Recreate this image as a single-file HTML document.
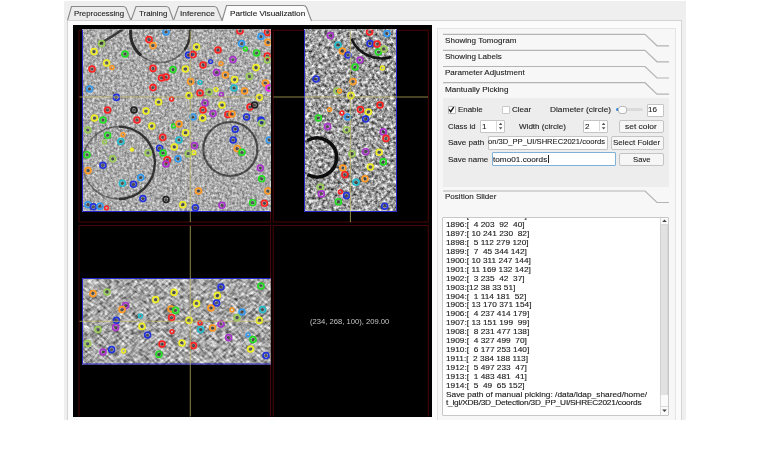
<!DOCTYPE html>
<html><head><meta charset="utf-8">
<style>
html,body{margin:0;padding:0;background:#fff;}
body{width:780px;height:470px;overflow:hidden;position:relative;font-family:"Liberation Sans",sans-serif;font-size:8.3px;color:#222;}
.a{position:absolute;}
.t{position:absolute;white-space:pre;line-height:1;-webkit-text-stroke:0.1px #222;}
#win{left:64px;top:1px;width:622px;height:419px;background:#efefef;}
#frame{left:67px;top:19.5px;width:613px;height:402px;background:#fbfbfb;border:1px solid #d4d4d4;}
#viewer{left:73px;top:25px;width:359.4px;height:391.5px;background:#000;overflow:hidden;}
#grp{left:437px;top:28px;width:237px;height:400px;background:#f7f7f7;border:1px solid #e4e4e4;}
.box{position:absolute;background:#fff;border:1px solid #c4c4c4;border-radius:1px;}
.btn{position:absolute;background:#f6f6f6;border:1px solid #c4c4c4;border-radius:2px;text-align:center;}
</style></head><body>
<div class="a" style="left:0;top:0;width:780px;height:420px;overflow:hidden;filter:blur(0.3px);">
<div class="a" id="win"></div>
<svg class="a" style="left:0;top:0" width="780" height="470">
  <!-- tabs -->
  <path d="M67.5 20.5 L71.5 6.5 L123 6.5 Q125 6.5 126 8 L131 20.5" fill="#ececec" stroke="#8a8a8a" stroke-width="1.1"/>
  <path d="M131 20.5 L136 6.5 L166 6.5 Q168 6.5 169 8 L173.5 20.5" fill="#ececec" stroke="#8a8a8a" stroke-width="1.1"/>
  <path d="M173.5 20.5 L178.5 6.5 L214 6.5 Q216 6.5 217 8 L222 20.5" fill="#ececec" stroke="#8a8a8a" stroke-width="1.1"/>
</svg>
<div class="a" id="frame"></div>
<svg class="a" style="left:0;top:0" width="780" height="470">
  <path d="M222 21 L226.5 5.5 L303 5.5 Q305.5 5.5 306.5 7.5 L311.5 21" fill="#fbfbfb" stroke="#8a8a8a" stroke-width="1.1"/>
</svg>
<div class="t" style="left:74.01px;top:10.01px;font-size:7.2px;transform-origin:0 0;transform:scaleX(1.090);">Preprocessing</div>
<div class="t" style="left:139.00px;top:10.01px;font-size:7.2px;transform-origin:0 0;transform:scaleX(1.104);">Training</div>
<div class="t" style="left:179.96px;top:10.18px;font-size:7.2px;transform-origin:0 0;transform:scaleX(1.162);">Inference</div>
<div class="t" style="left:229.60px;top:9.56px;font-size:7.2px;transform-origin:0 0;transform:scaleX(1.136);">Particle Visualization</div>

<div class="a" id="viewer"></div>
<!--IMGS-->
<svg class="a" style="left:0;top:0" width="780" height="470">
<clipPath id="cV"><rect x="73" y="25.3" width="359.5" height="391.2"/></clipPath>
<defs>
<filter id="nTL" x="0" y="0" width="100%" height="100%" filterUnits="objectBoundingBox" color-interpolation-filters="sRGB">
  <feTurbulence type="fractalNoise" baseFrequency="0.4" numOctaves="3" seed="3"/>
  <feGaussianBlur stdDeviation="0.6"/>
  <feColorMatrix type="matrix" values="0.72 0 0 0 0.31  0.72 0 0 0 0.31  0.72 0 0 0 0.31  0 0 0 0 1"/>
</filter>
<filter id="nTR" x="0" y="0" width="100%" height="100%" filterUnits="objectBoundingBox" color-interpolation-filters="sRGB">
  <feTurbulence type="fractalNoise" baseFrequency="0.32" numOctaves="3" seed="7"/>
  <feGaussianBlur stdDeviation="0.5"/>
  <feColorMatrix type="matrix" values="1.3 0 0 0 -0.03  1.3 0 0 0 -0.03  1.3 0 0 0 -0.03  0 0 0 0 1"/>
</filter>
<filter id="nBL" x="0" y="0" width="100%" height="100%" filterUnits="objectBoundingBox" color-interpolation-filters="sRGB">
  <feTurbulence type="fractalNoise" baseFrequency="0.15 0.5" numOctaves="3" seed="11"/>
  <feGaussianBlur stdDeviation="0.4"/>
  <feColorMatrix type="matrix" values="1.7 0 0 0 -0.2  1.7 0 0 0 -0.2  1.7 0 0 0 -0.2  0 0 0 0 1"/>
</filter>
<filter id="nBL2" x="0" y="0" width="100%" height="100%" filterUnits="objectBoundingBox" color-interpolation-filters="sRGB">
  <feTurbulence type="fractalNoise" baseFrequency="0.15 0.5" numOctaves="3" seed="23"/>
  <feGaussianBlur stdDeviation="0.4"/>
  <feColorMatrix type="matrix" values="1.7 0 0 0 -0.2  1.7 0 0 0 -0.2  1.7 0 0 0 -0.2  0 0 0 0 1"/>
</filter>
<filter id="soft" x="-10%" y="-10%" width="120%" height="120%"><feGaussianBlur stdDeviation="0.55"/></filter>
<clipPath id="cTL"><rect x="82" y="29.7" width="188.6" height="182.3"/></clipPath>
<clipPath id="cTR"><rect x="304" y="29.7" width="93" height="182.3"/></clipPath>
<clipPath id="cBL"><rect x="82" y="278" width="188.6" height="86.5"/></clipPath>
</defs>
<g clip-path="url(#cV)">
<g fill="none" stroke="#4a0606" stroke-width="1">
<rect x="79" y="30.3" width="191.5" height="191.7"/>
<rect x="273.2" y="30.3" width="155" height="191.7"/>
<rect x="79" y="225.5" width="191.5" height="200"/>
<rect x="273.2" y="225.5" width="155" height="200"/>
</g>
<rect x="82" y="29.7" width="188.6" height="182.3" fill="#aaa" filter="url(#nTL)"/>
<rect x="304" y="29.7" width="93" height="182.3" fill="#aaa" filter="url(#nTR)"/>
<g clip-path="url(#cBL)"><g transform="rotate(40 176 321)"><rect x="46" y="191" width="260" height="260" filter="url(#nBL)"/></g><g transform="rotate(-40 176 321)" opacity="0.5"><rect x="46" y="191" width="260" height="260" filter="url(#nBL2)"/></g></g>
<g clip-path="url(#cTL)"><g fill="none" stroke="#262626" filter="url(#soft)">
<circle cx="160.25" cy="33" r="29.6" stroke-width="1.8" stroke-opacity="0.55"/>
<path d="M132.4 22.9 A29.6 29.6 0 0 0 141 55.5" stroke-width="3" stroke-opacity="0.95"/>
<path d="M188.05 22.9 A29.6 29.6 0 0 1 184.5 50" stroke-width="2.4" stroke-opacity="0.9"/>
<path d="M118.7 126.6 A36.2 36.2 0 0 1 118.7 199" stroke-width="2.4" stroke-opacity="0.9"/>
<path d="M118.7 199 A36.2 36.2 0 0 1 118.7 126.6" stroke-width="1.6" stroke-opacity="0.5"/>
<circle cx="230.3" cy="149" r="27" stroke-width="2.2" stroke-opacity="0.72"/>
<path d="M124 28.5 Q112 37 99 44" stroke-width="2.4" stroke-opacity="0.85"/>
</g></g>
<g clip-path="url(#cTR)"><g fill="none" stroke="#111" filter="url(#soft)">
<path d="M307.5 140.5 A19.5 19.5 0 1 1 307.5 174.5" stroke-width="3.6"/>
<path d="M351.5 39 A33.2 33.2 0 0 0 391.5 57" stroke-width="2.6" stroke-opacity="0.95"/>
</g></g>
<g clip-path="url(#cTL)" fill="none" stroke-width="1.7">
<circle cx="166" cy="32" r="1.6" fill="#282828" fill-opacity="0.7" stroke="none"/><circle cx="166" cy="32" r="2.95" stroke="#39e"/>
<circle cx="149" cy="39.6" r="1.6" fill="#282828" fill-opacity="0.7" stroke="none"/><circle cx="149" cy="39.6" r="2.95" stroke="#f22"/>
<circle cx="153" cy="45.6" r="1.6" fill="#282828" fill-opacity="0.7" stroke="none"/><circle cx="153" cy="45.6" r="2.95" stroke="#f92"/>
<circle cx="101.6" cy="43.6" r="1.6" fill="#282828" fill-opacity="0.7" stroke="none"/><circle cx="101.6" cy="43.6" r="2.95" stroke="#9c5"/>
<circle cx="94" cy="51.6" r="1.6" fill="#282828" fill-opacity="0.7" stroke="none"/><circle cx="94" cy="51.6" r="2.95" stroke="#ee2"/>
<circle cx="125" cy="54" r="1.6" fill="#282828" fill-opacity="0.7" stroke="none"/><circle cx="125" cy="54" r="2.95" stroke="#2d2"/>
<circle cx="106.6" cy="63" r="1.6" fill="#282828" fill-opacity="0.7" stroke="none"/><circle cx="106.6" cy="63" r="2.95" stroke="#ee2"/>
<circle cx="112" cy="67.6" r="1.9" stroke="#f92" stroke-width="1.5"/>
<circle cx="92" cy="69" r="1.6" fill="#282828" fill-opacity="0.7" stroke="none"/><circle cx="92" cy="69" r="2.95" stroke="#f22"/>
<circle cx="153" cy="68.4" r="1.6" fill="#282828" fill-opacity="0.7" stroke="none"/><circle cx="153" cy="68.4" r="2.95" stroke="#f22"/>
<circle cx="173" cy="69.6" r="1.6" fill="#282828" fill-opacity="0.7" stroke="none"/><circle cx="173" cy="69.6" r="2.95" stroke="#2d2"/>
<circle cx="166" cy="77" r="1.6" fill="#282828" fill-opacity="0.7" stroke="none"/><circle cx="166" cy="77" r="2.95" stroke="#f22"/>
<circle cx="161.6" cy="78" r="1.6" fill="#282828" fill-opacity="0.7" stroke="none"/><circle cx="161.6" cy="78" r="2.95" stroke="#f22"/>
<circle cx="89.6" cy="89" r="1.6" fill="#282828" fill-opacity="0.7" stroke="none"/><circle cx="89.6" cy="89" r="2.95" stroke="#39e"/>
<circle cx="153" cy="87.6" r="1.6" fill="#282828" fill-opacity="0.7" stroke="none"/><circle cx="153" cy="87.6" r="2.95" stroke="#f22"/>
<circle cx="116.4" cy="97.4" r="1.6" fill="#282828" fill-opacity="0.7" stroke="none"/><circle cx="116.4" cy="97.4" r="2.95" stroke="#23d"/>
<circle cx="158.6" cy="102" r="1.6" fill="#282828" fill-opacity="0.7" stroke="none"/><circle cx="158.6" cy="102" r="2.95" stroke="#ee2"/>
<circle cx="171.6" cy="99" r="1.9" stroke="#f22" stroke-width="1.5"/>
<circle cx="107.6" cy="110" r="1.6" fill="#282828" fill-opacity="0.7" stroke="none"/><circle cx="107.6" cy="110" r="2.95" stroke="#f22"/>
<circle cx="146" cy="111" r="1.6" fill="#282828" fill-opacity="0.7" stroke="none"/><circle cx="146" cy="111" r="2.95" stroke="#ee2"/>
<circle cx="134" cy="110" r="1.6" fill="#282828" fill-opacity="0.7" stroke="none"/><circle cx="134" cy="110" r="2.95" stroke="#222"/>
<circle cx="94.4" cy="118" r="1.6" fill="#282828" fill-opacity="0.7" stroke="none"/><circle cx="94.4" cy="118" r="2.95" stroke="#ee2"/>
<circle cx="103" cy="120" r="1.6" fill="#282828" fill-opacity="0.7" stroke="none"/><circle cx="103" cy="120" r="2.95" stroke="#2d2"/>
<circle cx="137" cy="120" r="1.6" fill="#282828" fill-opacity="0.7" stroke="none"/><circle cx="137" cy="120" r="2.95" stroke="#f22"/>
<circle cx="240" cy="31" r="1.6" fill="#282828" fill-opacity="0.7" stroke="none"/><circle cx="240" cy="31" r="2.95" stroke="#f22"/>
<circle cx="267.4" cy="32.4" r="1.6" fill="#282828" fill-opacity="0.7" stroke="none"/><circle cx="267.4" cy="32.4" r="2.95" stroke="#f22"/>
<circle cx="261" cy="36.4" r="1.6" fill="#282828" fill-opacity="0.7" stroke="none"/><circle cx="261" cy="36.4" r="2.95" stroke="#39e"/>
<circle cx="268" cy="42.4" r="1.6" fill="#282828" fill-opacity="0.7" stroke="none"/><circle cx="268" cy="42.4" r="2.95" stroke="#f92"/>
<circle cx="241.6" cy="43.6" r="1.6" fill="#282828" fill-opacity="0.7" stroke="none"/><circle cx="241.6" cy="43.6" r="2.95" stroke="#39e"/>
<circle cx="245.4" cy="49" r="1.9" stroke="#2d2" stroke-width="1.5"/>
<circle cx="196.6" cy="47" r="1.6" fill="#282828" fill-opacity="0.7" stroke="none"/><circle cx="196.6" cy="47" r="2.95" stroke="#ee2"/>
<circle cx="218" cy="50" r="1.6" fill="#282828" fill-opacity="0.7" stroke="none"/><circle cx="218" cy="50" r="2.95" stroke="#f22"/>
<circle cx="256.6" cy="53" r="1.6" fill="#282828" fill-opacity="0.7" stroke="none"/><circle cx="256.6" cy="53" r="2.95" stroke="#2d2"/>
<circle cx="188.6" cy="55" r="1.6" fill="#282828" fill-opacity="0.7" stroke="none"/><circle cx="188.6" cy="55" r="2.95" stroke="#23d"/>
<circle cx="193" cy="54.6" r="1.6" fill="#282828" fill-opacity="0.7" stroke="none"/><circle cx="193" cy="54.6" r="2.95" stroke="#f22"/>
<circle cx="267.4" cy="56" r="1.6" fill="#282828" fill-opacity="0.7" stroke="none"/><circle cx="267.4" cy="56" r="2.95" stroke="#f22"/>
<circle cx="210.6" cy="61.6" r="1.9" stroke="#23d" stroke-width="1.5"/>
<circle cx="233" cy="59.6" r="1.6" fill="#282828" fill-opacity="0.7" stroke="none"/><circle cx="233" cy="59.6" r="2.95" stroke="#a3c"/>
<circle cx="267.4" cy="60" r="1.6" fill="#282828" fill-opacity="0.7" stroke="none"/><circle cx="267.4" cy="60" r="2.95" stroke="#9c5"/>
<circle cx="203" cy="65" r="1.6" fill="#282828" fill-opacity="0.7" stroke="none"/><circle cx="203" cy="65" r="2.95" stroke="#f22"/>
<circle cx="221" cy="63.6" r="1.9" stroke="#f92" stroke-width="1.5"/>
<circle cx="185.4" cy="69" r="1.6" fill="#282828" fill-opacity="0.7" stroke="none"/><circle cx="185.4" cy="69" r="2.95" stroke="#ee2"/>
<circle cx="256" cy="67.6" r="1.6" fill="#282828" fill-opacity="0.7" stroke="none"/><circle cx="256" cy="67.6" r="2.95" stroke="#ee2"/>
<circle cx="216.6" cy="72.4" r="1.6" fill="#282828" fill-opacity="0.7" stroke="none"/><circle cx="216.6" cy="72.4" r="2.95" stroke="#a3c"/>
<circle cx="225.4" cy="75" r="1.6" fill="#282828" fill-opacity="0.7" stroke="none"/><circle cx="225.4" cy="75" r="2.95" stroke="#f92"/>
<circle cx="249.4" cy="76.4" r="1.6" fill="#282828" fill-opacity="0.7" stroke="none"/><circle cx="249.4" cy="76.4" r="2.95" stroke="#9c5"/>
<circle cx="234.6" cy="79.6" r="1.6" fill="#282828" fill-opacity="0.7" stroke="none"/><circle cx="234.6" cy="79.6" r="2.95" stroke="#ee2"/>
<circle cx="190.6" cy="81.6" r="1.6" fill="#282828" fill-opacity="0.7" stroke="none"/><circle cx="190.6" cy="81.6" r="2.95" stroke="#f92"/>
<circle cx="200" cy="82.4" r="1.9" stroke="#2bc" stroke-width="1.5"/>
<circle cx="265.4" cy="83" r="1.6" fill="#282828" fill-opacity="0.7" stroke="none"/><circle cx="265.4" cy="83" r="2.95" stroke="#f92"/>
<circle cx="234" cy="88" r="1.6" fill="#282828" fill-opacity="0.7" stroke="none"/><circle cx="234" cy="88" r="2.95" stroke="#2bc"/>
<circle cx="269" cy="88" r="1.6" fill="#282828" fill-opacity="0.7" stroke="none"/><circle cx="269" cy="88" r="2.95" stroke="#e2e"/>
<circle cx="244.6" cy="91" r="1.6" fill="#282828" fill-opacity="0.7" stroke="none"/><circle cx="244.6" cy="91" r="2.95" stroke="#f92"/>
<circle cx="216" cy="89.6" r="1.9" stroke="#ee2" stroke-width="1.5"/>
<circle cx="209" cy="92" r="1.6" fill="#282828" fill-opacity="0.7" stroke="none"/><circle cx="209" cy="92" r="2.95" stroke="#9c5"/>
<circle cx="200" cy="93" r="1.6" fill="#282828" fill-opacity="0.7" stroke="none"/><circle cx="200" cy="93" r="2.95" stroke="#f22"/>
<circle cx="189" cy="95.6" r="1.6" fill="#282828" fill-opacity="0.7" stroke="none"/><circle cx="189" cy="95.6" r="2.95" stroke="#ee2"/>
<circle cx="221.4" cy="94.4" r="1.9" stroke="#a3c" stroke-width="1.5"/>
<circle cx="259.4" cy="97.6" r="1.6" fill="#282828" fill-opacity="0.7" stroke="none"/><circle cx="259.4" cy="97.6" r="2.95" stroke="#ee2"/>
<circle cx="205" cy="103" r="1.6" fill="#282828" fill-opacity="0.7" stroke="none"/><circle cx="205" cy="103" r="2.95" stroke="#a3c"/>
<circle cx="222" cy="105" r="1.6" fill="#282828" fill-opacity="0.7" stroke="none"/><circle cx="222" cy="105" r="2.95" stroke="#ee2"/>
<circle cx="250" cy="107" r="1.6" fill="#282828" fill-opacity="0.7" stroke="none"/><circle cx="250" cy="107" r="2.95" stroke="#f22"/>
<circle cx="254.6" cy="105" r="1.6" fill="#282828" fill-opacity="0.7" stroke="none"/><circle cx="254.6" cy="105" r="2.95" stroke="#222"/>
<circle cx="203" cy="110" r="1.6" fill="#282828" fill-opacity="0.7" stroke="none"/><circle cx="203" cy="110" r="2.95" stroke="#f22"/>
<circle cx="213" cy="113.6" r="1.6" fill="#282828" fill-opacity="0.7" stroke="none"/><circle cx="213" cy="113.6" r="2.95" stroke="#a3c"/>
<circle cx="228" cy="114.4" r="1.6" fill="#282828" fill-opacity="0.7" stroke="none"/><circle cx="228" cy="114.4" r="2.95" stroke="#f22"/>
<circle cx="232" cy="114" r="1.6" fill="#282828" fill-opacity="0.7" stroke="none"/><circle cx="232" cy="114" r="2.95" stroke="#f92"/>
<circle cx="246.6" cy="117" r="1.6" fill="#282828" fill-opacity="0.7" stroke="none"/><circle cx="246.6" cy="117" r="2.95" stroke="#23d"/>
<circle cx="193" cy="117" r="1.6" fill="#282828" fill-opacity="0.7" stroke="none"/><circle cx="193" cy="117" r="2.95" stroke="#39e"/>
<circle cx="202.6" cy="118" r="1.6" fill="#282828" fill-opacity="0.7" stroke="none"/><circle cx="202.6" cy="118" r="2.95" stroke="#ee2"/>
<circle cx="261" cy="120" r="1.6" fill="#282828" fill-opacity="0.7" stroke="none"/><circle cx="261" cy="120" r="2.95" stroke="#23d"/>
<circle cx="151.8" cy="126" r="1.6" fill="#282828" fill-opacity="0.7" stroke="none"/><circle cx="151.8" cy="126" r="2.95" stroke="#ee2"/>
<circle cx="173.5" cy="126" r="1.9" stroke="#2d2" stroke-width="1.5"/>
<circle cx="179" cy="124" r="1.6" fill="#282828" fill-opacity="0.7" stroke="none"/><circle cx="179" cy="124" r="2.95" stroke="#f92"/>
<circle cx="87.8" cy="130" r="1.6" fill="#282828" fill-opacity="0.7" stroke="none"/><circle cx="87.8" cy="130" r="2.95" stroke="#9c5"/>
<circle cx="107.6" cy="135.3" r="1.6" fill="#282828" fill-opacity="0.7" stroke="none"/><circle cx="107.6" cy="135.3" r="2.95" stroke="#2d2"/>
<circle cx="122.9" cy="134.7" r="1.9" stroke="#f92" stroke-width="1.5"/>
<circle cx="104.5" cy="142" r="1.9" stroke="#9c5" stroke-width="1.5"/>
<circle cx="120.8" cy="141.5" r="1.6" fill="#282828" fill-opacity="0.7" stroke="none"/><circle cx="120.8" cy="141.5" r="2.95" stroke="#2bc"/>
<circle cx="162.7" cy="137.4" r="1.6" fill="#282828" fill-opacity="0.7" stroke="none"/><circle cx="162.7" cy="137.4" r="2.95" stroke="#f22"/>
<circle cx="179" cy="140" r="1.6" fill="#282828" fill-opacity="0.7" stroke="none"/><circle cx="179" cy="140" r="2.95" stroke="#2bc"/>
<circle cx="159.6" cy="148.2" r="1.6" fill="#282828" fill-opacity="0.7" stroke="none"/><circle cx="159.6" cy="148.2" r="2.95" stroke="#23d"/>
<circle cx="174.3" cy="147" r="1.6" fill="#282828" fill-opacity="0.7" stroke="none"/><circle cx="174.3" cy="147" r="2.95" stroke="#ee2"/>
<circle cx="148" cy="153" r="1.6" fill="#282828" fill-opacity="0.7" stroke="none"/><circle cx="148" cy="153" r="2.95" stroke="#9c5"/>
<circle cx="163" cy="153" r="1.6" fill="#282828" fill-opacity="0.7" stroke="none"/><circle cx="163" cy="153" r="2.95" stroke="#2d2"/>
<circle cx="87" cy="154.7" r="1.6" fill="#282828" fill-opacity="0.7" stroke="none"/><circle cx="87" cy="154.7" r="2.95" stroke="#2d2"/>
<circle cx="112.7" cy="158.8" r="1.6" fill="#282828" fill-opacity="0.7" stroke="none"/><circle cx="112.7" cy="158.8" r="2.95" stroke="#9c5"/>
<circle cx="167.3" cy="159.8" r="1.6" fill="#282828" fill-opacity="0.7" stroke="none"/><circle cx="167.3" cy="159.8" r="2.95" stroke="#f22"/>
<circle cx="178" cy="158.8" r="1.6" fill="#282828" fill-opacity="0.7" stroke="none"/><circle cx="178" cy="158.8" r="2.95" stroke="#39e"/>
<circle cx="102.9" cy="165.3" r="1.6" fill="#282828" fill-opacity="0.7" stroke="none"/><circle cx="102.9" cy="165.3" r="2.95" stroke="#23d"/>
<circle cx="166" cy="164" r="1.6" fill="#282828" fill-opacity="0.7" stroke="none"/><circle cx="166" cy="164" r="2.95" stroke="#a3c"/>
<circle cx="88" cy="170.6" r="1.6" fill="#282828" fill-opacity="0.7" stroke="none"/><circle cx="88" cy="170.6" r="2.95" stroke="#f92"/>
<circle cx="140.8" cy="177.6" r="1.6" fill="#282828" fill-opacity="0.7" stroke="none"/><circle cx="140.8" cy="177.6" r="2.95" stroke="#39e"/>
<circle cx="122.4" cy="183.3" r="1.6" fill="#282828" fill-opacity="0.7" stroke="none"/><circle cx="122.4" cy="183.3" r="2.95" stroke="#2bc"/>
<circle cx="133.5" cy="184.3" r="1.6" fill="#282828" fill-opacity="0.7" stroke="none"/><circle cx="133.5" cy="184.3" r="2.95" stroke="#23d"/>
<circle cx="142.9" cy="198.6" r="1.6" fill="#282828" fill-opacity="0.7" stroke="none"/><circle cx="142.9" cy="198.6" r="2.95" stroke="#23d"/>
<circle cx="166" cy="199.6" r="1.6" fill="#282828" fill-opacity="0.7" stroke="none"/><circle cx="166" cy="199.6" r="2.95" stroke="#222"/>
<circle cx="88" cy="204.7" r="1.6" fill="#282828" fill-opacity="0.7" stroke="none"/><circle cx="88" cy="204.7" r="2.95" stroke="#39e"/>
<circle cx="106.5" cy="207.8" r="1.9" stroke="#f22" stroke-width="1.5"/>
<circle cx="261.7" cy="120" r="1.9" stroke="#23d" stroke-width="1.5"/>
<circle cx="93.3" cy="206.8" r="1.6" fill="#282828" fill-opacity="0.7" stroke="none"/><circle cx="93.3" cy="206.8" r="2.95" stroke="#23d"/>
<circle cx="100" cy="206.2" r="1.6" fill="#282828" fill-opacity="0.7" stroke="none"/><circle cx="100" cy="206.2" r="2.95" stroke="#39e"/>
<circle cx="185.6" cy="132.7" r="1.6" fill="#282828" fill-opacity="0.7" stroke="none"/><circle cx="185.6" cy="132.7" r="2.95" stroke="#ee2"/>
<circle cx="194.4" cy="145.6" r="1.6" fill="#282828" fill-opacity="0.7" stroke="none"/><circle cx="194.4" cy="145.6" r="2.95" stroke="#a3c"/>
<circle cx="193.8" cy="152.7" r="1.9" stroke="#ee2" stroke-width="1.5"/>
<circle cx="188.3" cy="153.7" r="1.6" fill="#282828" fill-opacity="0.7" stroke="none"/><circle cx="188.3" cy="153.7" r="2.95" stroke="#9c5"/>
<circle cx="261.7" cy="123" r="1.6" fill="#282828" fill-opacity="0.7" stroke="none"/><circle cx="261.7" cy="123" r="2.95" stroke="#9c5"/>
<circle cx="235.2" cy="129.2" r="1.6" fill="#282828" fill-opacity="0.7" stroke="none"/><circle cx="235.2" cy="129.2" r="2.95" stroke="#23d"/>
<circle cx="233.2" cy="140" r="1.6" fill="#282828" fill-opacity="0.7" stroke="none"/><circle cx="233.2" cy="140" r="2.95" stroke="#23d"/>
<circle cx="237.2" cy="148.6" r="1.6" fill="#282828" fill-opacity="0.7" stroke="none"/><circle cx="237.2" cy="148.6" r="2.95" stroke="#f92"/>
<circle cx="242" cy="152.3" r="1.6" fill="#282828" fill-opacity="0.7" stroke="none"/><circle cx="242" cy="152.3" r="2.95" stroke="#2d2"/>
<circle cx="269.3" cy="140" r="1.6" fill="#282828" fill-opacity="0.7" stroke="none"/><circle cx="269.3" cy="140" r="2.95" stroke="#39e"/>
<circle cx="260.3" cy="168" r="1.6" fill="#282828" fill-opacity="0.7" stroke="none"/><circle cx="260.3" cy="168" r="2.95" stroke="#a3c"/>
<circle cx="261.7" cy="178.8" r="1.6" fill="#282828" fill-opacity="0.7" stroke="none"/><circle cx="261.7" cy="178.8" r="2.95" stroke="#2d2"/>
<circle cx="198.5" cy="191" r="1.6" fill="#282828" fill-opacity="0.7" stroke="none"/><circle cx="198.5" cy="191" r="2.95" stroke="#f92"/>
<circle cx="267.9" cy="191" r="1.6" fill="#282828" fill-opacity="0.7" stroke="none"/><circle cx="267.9" cy="191" r="2.95" stroke="#f92"/>
<circle cx="182.8" cy="204.7" r="1.6" fill="#282828" fill-opacity="0.7" stroke="none"/><circle cx="182.8" cy="204.7" r="2.95" stroke="#ee2"/>
<circle cx="195.4" cy="207.8" r="1.6" fill="#282828" fill-opacity="0.7" stroke="none"/><circle cx="195.4" cy="207.8" r="2.95" stroke="#23d"/>
<circle cx="222" cy="205.3" r="1.6" fill="#282828" fill-opacity="0.7" stroke="none"/><circle cx="222" cy="205.3" r="2.95" stroke="#a3c"/>
<circle cx="252.6" cy="202.7" r="1.6" fill="#282828" fill-opacity="0.7" stroke="none"/><circle cx="252.6" cy="202.7" r="2.95" stroke="#2d2"/>
<circle cx="264.4" cy="203.3" r="1.6" fill="#282828" fill-opacity="0.7" stroke="none"/><circle cx="264.4" cy="203.3" r="2.95" stroke="#f22"/>
</g>
<g clip-path="url(#cTR)" fill="none" stroke-width="1.7">
<circle cx="330.4" cy="35.6" r="1.6" fill="#282828" fill-opacity="0.7" stroke="none"/><circle cx="330.4" cy="35.6" r="2.95" stroke="#a3c"/>
<circle cx="369.6" cy="32" r="1.6" fill="#282828" fill-opacity="0.7" stroke="none"/><circle cx="369.6" cy="32" r="2.95" stroke="#f22"/>
<circle cx="387" cy="33.6" r="1.6" fill="#282828" fill-opacity="0.7" stroke="none"/><circle cx="387" cy="33.6" r="2.95" stroke="#39e"/>
<circle cx="338" cy="45" r="1.6" fill="#282828" fill-opacity="0.7" stroke="none"/><circle cx="338" cy="45" r="2.95" stroke="#2bc"/>
<circle cx="370" cy="43.6" r="1.6" fill="#282828" fill-opacity="0.7" stroke="none"/><circle cx="370" cy="43.6" r="2.95" stroke="#23d"/>
<circle cx="377" cy="44" r="1.6" fill="#282828" fill-opacity="0.7" stroke="none"/><circle cx="377" cy="44" r="2.95" stroke="#f22"/>
<circle cx="378.4" cy="52" r="1.6" fill="#282828" fill-opacity="0.7" stroke="none"/><circle cx="378.4" cy="52" r="2.95" stroke="#2d2"/>
<circle cx="384" cy="49" r="1.6" fill="#282828" fill-opacity="0.7" stroke="none"/><circle cx="384" cy="49" r="2.95" stroke="#9c5"/>
<circle cx="342.4" cy="51" r="1.6" fill="#282828" fill-opacity="0.7" stroke="none"/><circle cx="342.4" cy="51" r="2.95" stroke="#f92"/>
<circle cx="348" cy="55" r="1.6" fill="#282828" fill-opacity="0.7" stroke="none"/><circle cx="348" cy="55" r="2.95" stroke="#23d"/>
<circle cx="360" cy="60" r="1.6" fill="#282828" fill-opacity="0.7" stroke="none"/><circle cx="360" cy="60" r="2.95" stroke="#a3c"/>
<circle cx="355" cy="67" r="1.6" fill="#282828" fill-opacity="0.7" stroke="none"/><circle cx="355" cy="67" r="2.95" stroke="#2d2"/>
<circle cx="382.4" cy="68" r="1.9" stroke="#ee2" stroke-width="1.5"/>
<circle cx="316" cy="79" r="1.6" fill="#282828" fill-opacity="0.7" stroke="none"/><circle cx="316" cy="79" r="2.95" stroke="#23d"/>
<circle cx="353" cy="81.6" r="1.6" fill="#282828" fill-opacity="0.7" stroke="none"/><circle cx="353" cy="81.6" r="2.95" stroke="#f92"/>
<circle cx="337" cy="91" r="1.6" fill="#282828" fill-opacity="0.7" stroke="none"/><circle cx="337" cy="91" r="2.95" stroke="#9c5"/>
<circle cx="339.6" cy="91" r="1.9" stroke="#f92" stroke-width="1.5"/>
<circle cx="351" cy="95.6" r="1.6" fill="#282828" fill-opacity="0.7" stroke="none"/><circle cx="351" cy="95.6" r="2.95" stroke="#ee2"/>
<circle cx="380" cy="105" r="1.6" fill="#282828" fill-opacity="0.7" stroke="none"/><circle cx="380" cy="105" r="2.95" stroke="#f22"/>
<circle cx="329.6" cy="109.6" r="1.9" stroke="#f92" stroke-width="1.5"/>
<circle cx="360.4" cy="109.6" r="1.6" fill="#282828" fill-opacity="0.7" stroke="none"/><circle cx="360.4" cy="109.6" r="2.95" stroke="#f22"/>
<circle cx="368.4" cy="112" r="1.6" fill="#282828" fill-opacity="0.7" stroke="none"/><circle cx="368.4" cy="112" r="2.95" stroke="#ee2"/>
<circle cx="342" cy="113" r="1.9" stroke="#f22" stroke-width="1.5"/>
<circle cx="347.6" cy="117" r="1.6" fill="#282828" fill-opacity="0.7" stroke="none"/><circle cx="347.6" cy="117" r="2.95" stroke="#39e"/>
<circle cx="318.4" cy="118" r="1.6" fill="#282828" fill-opacity="0.7" stroke="none"/><circle cx="318.4" cy="118" r="2.95" stroke="#2d2"/>
<circle cx="365.6" cy="119" r="1.6" fill="#282828" fill-opacity="0.7" stroke="none"/><circle cx="365.6" cy="119" r="2.95" stroke="#23d"/>
<circle cx="327.6" cy="126.6" r="1.6" fill="#282828" fill-opacity="0.7" stroke="none"/><circle cx="327.6" cy="126.6" r="2.95" stroke="#a3c"/>
<circle cx="346.5" cy="129.8" r="1.6" fill="#282828" fill-opacity="0.7" stroke="none"/><circle cx="346.5" cy="129.8" r="2.95" stroke="#9c5"/>
<circle cx="383.3" cy="131.9" r="1.6" fill="#282828" fill-opacity="0.7" stroke="none"/><circle cx="383.3" cy="131.9" r="2.95" stroke="#a3c"/>
<circle cx="386" cy="138.4" r="1.6" fill="#282828" fill-opacity="0.7" stroke="none"/><circle cx="386" cy="138.4" r="2.95" stroke="#f22"/>
<circle cx="352" cy="153.7" r="1.6" fill="#282828" fill-opacity="0.7" stroke="none"/><circle cx="352" cy="153.7" r="2.95" stroke="#9c5"/>
<circle cx="365.7" cy="151.7" r="1.6" fill="#282828" fill-opacity="0.7" stroke="none"/><circle cx="365.7" cy="151.7" r="2.95" stroke="#a3c"/>
<circle cx="379.2" cy="152.3" r="1.6" fill="#282828" fill-opacity="0.7" stroke="none"/><circle cx="379.2" cy="152.3" r="2.95" stroke="#ee2"/>
<circle cx="383.3" cy="161.9" r="1.6" fill="#282828" fill-opacity="0.7" stroke="none"/><circle cx="383.3" cy="161.9" r="2.95" stroke="#2d2"/>
<circle cx="370.4" cy="167" r="1.6" fill="#282828" fill-opacity="0.7" stroke="none"/><circle cx="370.4" cy="167" r="2.95" stroke="#ee2"/>
<circle cx="342.9" cy="168" r="1.6" fill="#282828" fill-opacity="0.7" stroke="none"/><circle cx="342.9" cy="168" r="2.95" stroke="#f92"/>
<circle cx="344.9" cy="174.7" r="1.6" fill="#282828" fill-opacity="0.7" stroke="none"/><circle cx="344.9" cy="174.7" r="2.95" stroke="#f22"/>
<circle cx="365" cy="178.8" r="1.6" fill="#282828" fill-opacity="0.7" stroke="none"/><circle cx="365" cy="178.8" r="2.95" stroke="#f92"/>
<circle cx="356" cy="182.3" r="1.6" fill="#282828" fill-opacity="0.7" stroke="none"/><circle cx="356" cy="182.3" r="2.95" stroke="#2bc"/>
<circle cx="320.4" cy="187" r="1.6" fill="#282828" fill-opacity="0.7" stroke="none"/><circle cx="320.4" cy="187" r="2.95" stroke="#9c5"/>
<circle cx="321.4" cy="193.9" r="1.6" fill="#282828" fill-opacity="0.7" stroke="none"/><circle cx="321.4" cy="193.9" r="2.95" stroke="#a3c"/>
<circle cx="340.4" cy="191.9" r="1.9" stroke="#f22" stroke-width="1.5"/>
<circle cx="346.5" cy="195.6" r="1.6" fill="#282828" fill-opacity="0.7" stroke="none"/><circle cx="346.5" cy="195.6" r="2.95" stroke="#23d"/>
<circle cx="338.4" cy="201.7" r="1.6" fill="#282828" fill-opacity="0.7" stroke="none"/><circle cx="338.4" cy="201.7" r="2.95" stroke="#2d2"/>
<circle cx="384.7" cy="206.2" r="1.6" fill="#282828" fill-opacity="0.7" stroke="none"/><circle cx="384.7" cy="206.2" r="2.95" stroke="#23d"/>
</g>
<g clip-path="url(#cBL)" fill="none" stroke-width="1.7">
<circle cx="93" cy="293.6" r="1.6" fill="#282828" fill-opacity="0.7" stroke="none"/><circle cx="93" cy="293.6" r="2.95" stroke="#f92"/>
<circle cx="107" cy="292" r="1.6" fill="#282828" fill-opacity="0.7" stroke="none"/><circle cx="107" cy="292" r="2.95" stroke="#9c5"/>
<circle cx="174" cy="292.4" r="1.6" fill="#282828" fill-opacity="0.7" stroke="none"/><circle cx="174" cy="292.4" r="2.95" stroke="#ee2"/>
<circle cx="155.6" cy="299.6" r="1.6" fill="#282828" fill-opacity="0.7" stroke="none"/><circle cx="155.6" cy="299.6" r="2.95" stroke="#ee2"/>
<circle cx="125.6" cy="305.6" r="1.6" fill="#282828" fill-opacity="0.7" stroke="none"/><circle cx="125.6" cy="305.6" r="2.95" stroke="#a3c"/>
<circle cx="122" cy="309.6" r="1.6" fill="#282828" fill-opacity="0.7" stroke="none"/><circle cx="122" cy="309.6" r="2.95" stroke="#f92"/>
<circle cx="171" cy="309" r="1.6" fill="#282828" fill-opacity="0.7" stroke="none"/><circle cx="171" cy="309" r="2.95" stroke="#f92"/>
<circle cx="175.6" cy="310.4" r="1.6" fill="#282828" fill-opacity="0.7" stroke="none"/><circle cx="175.6" cy="310.4" r="2.95" stroke="#2d2"/>
<circle cx="140.4" cy="316" r="1.9" stroke="#2bc" stroke-width="1.5"/>
<circle cx="171.6" cy="317.6" r="1.6" fill="#282828" fill-opacity="0.7" stroke="none"/><circle cx="171.6" cy="317.6" r="2.95" stroke="#f22"/>
<circle cx="116.4" cy="320.4" r="1.6" fill="#282828" fill-opacity="0.7" stroke="none"/><circle cx="116.4" cy="320.4" r="2.95" stroke="#23d"/>
<circle cx="142" cy="326.4" r="1.6" fill="#282828" fill-opacity="0.7" stroke="none"/><circle cx="142" cy="326.4" r="2.95" stroke="#ee2"/>
<circle cx="115.6" cy="327.6" r="1.6" fill="#282828" fill-opacity="0.7" stroke="none"/><circle cx="115.6" cy="327.6" r="2.95" stroke="#a3c"/>
<circle cx="98" cy="329.6" r="1.6" fill="#282828" fill-opacity="0.7" stroke="none"/><circle cx="98" cy="329.6" r="2.95" stroke="#9c5"/>
<circle cx="172" cy="331.6" r="1.9" stroke="#f22" stroke-width="1.5"/>
<circle cx="147.6" cy="335" r="1.6" fill="#282828" fill-opacity="0.7" stroke="none"/><circle cx="147.6" cy="335" r="2.95" stroke="#23d"/>
<circle cx="87.6" cy="343.6" r="1.6" fill="#282828" fill-opacity="0.7" stroke="none"/><circle cx="87.6" cy="343.6" r="2.95" stroke="#9c5"/>
<circle cx="162" cy="344" r="1.6" fill="#282828" fill-opacity="0.7" stroke="none"/><circle cx="162" cy="344" r="2.95" stroke="#f22"/>
<circle cx="111.6" cy="349.6" r="1.6" fill="#282828" fill-opacity="0.7" stroke="none"/><circle cx="111.6" cy="349.6" r="2.95" stroke="#23d"/>
<circle cx="103" cy="352" r="1.6" fill="#282828" fill-opacity="0.7" stroke="none"/><circle cx="103" cy="352" r="2.95" stroke="#a3c"/>
<circle cx="123.6" cy="351" r="1.9" stroke="#ee2" stroke-width="1.5"/>
<circle cx="159" cy="354.4" r="1.6" fill="#282828" fill-opacity="0.7" stroke="none"/><circle cx="159" cy="354.4" r="2.95" stroke="#2d2"/>
<circle cx="221" cy="287" r="1.6" fill="#282828" fill-opacity="0.7" stroke="none"/><circle cx="221" cy="287" r="2.95" stroke="#23d"/>
<circle cx="261" cy="286" r="1.6" fill="#282828" fill-opacity="0.7" stroke="none"/><circle cx="261" cy="286" r="2.95" stroke="#2d2"/>
<circle cx="217.4" cy="295.6" r="1.6" fill="#282828" fill-opacity="0.7" stroke="none"/><circle cx="217.4" cy="295.6" r="2.95" stroke="#ee2"/>
<circle cx="196.6" cy="303.6" r="1.6" fill="#282828" fill-opacity="0.7" stroke="none"/><circle cx="196.6" cy="303.6" r="2.95" stroke="#ee2"/>
<circle cx="216.6" cy="303" r="1.6" fill="#282828" fill-opacity="0.7" stroke="none"/><circle cx="216.6" cy="303" r="2.95" stroke="#23d"/>
<circle cx="211" cy="308" r="1.6" fill="#282828" fill-opacity="0.7" stroke="none"/><circle cx="211" cy="308" r="2.95" stroke="#f92"/>
<circle cx="232" cy="310" r="1.9" stroke="#f92" stroke-width="1.5"/>
<circle cx="242" cy="312" r="1.6" fill="#282828" fill-opacity="0.7" stroke="none"/><circle cx="242" cy="312" r="2.95" stroke="#39e"/>
<circle cx="262.6" cy="309.6" r="1.6" fill="#282828" fill-opacity="0.7" stroke="none"/><circle cx="262.6" cy="309.6" r="2.95" stroke="#2bc"/>
<circle cx="237" cy="317.6" r="1.6" fill="#282828" fill-opacity="0.7" stroke="none"/><circle cx="237" cy="317.6" r="2.95" stroke="#9c5"/>
<circle cx="189" cy="320.4" r="1.6" fill="#282828" fill-opacity="0.7" stroke="none"/><circle cx="189" cy="320.4" r="2.95" stroke="#ee2"/>
<circle cx="259.4" cy="320.4" r="1.6" fill="#282828" fill-opacity="0.7" stroke="none"/><circle cx="259.4" cy="320.4" r="2.95" stroke="#ee2"/>
<circle cx="200" cy="323" r="1.9" stroke="#f22" stroke-width="1.5"/>
<circle cx="221" cy="324" r="1.6" fill="#282828" fill-opacity="0.7" stroke="none"/><circle cx="221" cy="324" r="2.95" stroke="#a3c"/>
<circle cx="212.6" cy="328" r="1.6" fill="#282828" fill-opacity="0.7" stroke="none"/><circle cx="212.6" cy="328" r="2.95" stroke="#f92"/>
<circle cx="200.6" cy="329.6" r="1.6" fill="#282828" fill-opacity="0.7" stroke="none"/><circle cx="200.6" cy="329.6" r="2.95" stroke="#2bc"/>
<circle cx="228.6" cy="337.6" r="1.6" fill="#282828" fill-opacity="0.7" stroke="none"/><circle cx="228.6" cy="337.6" r="2.95" stroke="#a3c"/>
<circle cx="248" cy="335" r="1.9" stroke="#39e" stroke-width="1.5"/>
<circle cx="253" cy="339.6" r="1.6" fill="#282828" fill-opacity="0.7" stroke="none"/><circle cx="253" cy="339.6" r="2.95" stroke="#2d2"/>
<circle cx="182" cy="343" r="1.6" fill="#282828" fill-opacity="0.7" stroke="none"/><circle cx="182" cy="343" r="2.95" stroke="#ee2"/>
<circle cx="193.4" cy="345.6" r="1.6" fill="#282828" fill-opacity="0.7" stroke="none"/><circle cx="193.4" cy="345.6" r="2.95" stroke="#f22"/>
<circle cx="250.6" cy="349" r="1.6" fill="#282828" fill-opacity="0.7" stroke="none"/><circle cx="250.6" cy="349" r="2.95" stroke="#ee2"/>
<circle cx="266" cy="355.6" r="1.6" fill="#282828" fill-opacity="0.7" stroke="none"/><circle cx="266" cy="355.6" r="2.95" stroke="#23d"/>
</g>
<circle cx="132" cy="149.6" r="2.2" fill="#ee2"/>
<g stroke="#2424c8" stroke-width="1" fill="none">
<path d="M82.5 29.7 V211.5 H270.6"/>
<path d="M304.5 29.7 V211.5 H396.5 V29.7"/>
<path d="M82.5 278.5 V364 H270.6 M82.5 278.5 H270.6"/>
</g>
<g stroke="#c0b860" stroke-opacity="0.72" stroke-width="1" fill="none">
<path d="M79.5 97 H270 M273.5 97 H428"/>
<path d="M190.3 30.5 V222 M190.3 226 V417"/>
<path d="M350.4 30.5 V222"/>
<path d="M79.5 321.3 H270"/>
</g>
</g>
</svg>
<div class="t" style="left:310.3px;top:317.9px;font-size:7px;transform-origin:0 0;transform:scaleX(1.09);color:#c4c4c4;-webkit-text-stroke:0;">(234, 268, 100), 209.00</div>
<!--/IMGS-->
<div class="a" id="grp"></div>

<svg class="a" style="left:0;top:0" width="780" height="470">
  <g fill="none" stroke="#b4b4b4" stroke-width="1.2">
    <path d="M443 34.3 H645 L657 45.8 H669"/>
    <path d="M443 50.3 H645 L657 61.8 H669"/>
    <path d="M443 66.5 H645 L657 78 H669"/>
    <path d="M443 82.7 H645 L657 94.2 H669"/>
    <path d="M443 191 H645 L657 202.5 H669"/>
  </g>
</svg>
<div class="t" style="left:444.7px;top:36.53px;font-size:7.2px;transform-origin:0 0;transform:scaleX(1.126);">Showing Tomogram</div>
<div class="t" style="left:444.7px;top:52.53px;font-size:7.2px;transform-origin:0 0;transform:scaleX(1.12);">Showing Labels</div>
<div class="t" style="left:444.7px;top:68.73px;font-size:7.2px;transform-origin:0 0;transform:scaleX(1.12);">Parameter Adjustment</div>
<div class="t" style="left:444.7px;top:85.53px;font-size:7.2px;transform-origin:0 0;transform:scaleX(1.134);">Mantually Picking</div>
<div class="t" style="left:444.7px;top:193.33px;font-size:7.2px;transform-origin:0 0;transform:scaleX(1.12);">Position Slider</div>

<div class="a" style="left:443px;top:98px;width:226px;height:88.5px;background:#ededed;"></div>


<!-- controls -->
<div class="box" style="left:447.5px;top:105.5px;width:6.5px;height:6.5px;border-color:#b8b8b8;"></div>
<svg class="a" style="left:447px;top:105px" width="9" height="9"><path d="M2 4.4 L3.7 6.6 L6.7 2.2" fill="none" stroke="#1a1a1a" stroke-width="1.5"/></svg>
<div class="t" style="left:458.01px;top:106.43px;font-size:7.2px;transform-origin:0 0;transform:scaleX(1.103);">Enable</div>
<div class="box" style="left:501.5px;top:105.5px;width:6.5px;height:6.5px;border-color:#c8c8c8;"></div>
<div class="t" style="left:512.20px;top:106.43px;font-size:7.2px;transform-origin:0 0;transform:scaleX(1.120);">Clear</div>
<div class="t" style="left:549.98px;top:106.43px;font-size:7.2px;transform-origin:0 0;transform:scaleX(1.158);">Diameter (circle)</div>
<div class="a" style="left:615.5px;top:108.2px;width:27.5px;height:3px;background:#dadada;border-radius:1.5px;"></div>
<div class="a" style="left:615.5px;top:108.2px;width:6px;height:3px;background:#3a8ad8;border-radius:1.5px;"></div>
<div class="a" style="left:618.4px;top:106.3px;width:6.2px;height:5.6px;background:#fbfbfb;border:1px solid #b8b8b8;border-radius:3px;"></div>
<div class="box" style="left:647px;top:103.5px;width:14.8px;height:11px;"></div>
<div class="t" style="left:648.2px;top:106.43px;font-size:7.2px;transform-origin:0 0;transform:scaleX(1.12);">16</div>

<div class="t" style="left:447.70px;top:122.63px;font-size:7.2px;transform-origin:0 0;transform:scaleX(1.073);">Class id</div>
<div class="box" style="left:479.5px;top:120px;width:23.5px;height:10.5px;"></div>
<div class="t" style="left:482.0px;top:122.63px;font-size:7.2px;transform-origin:0 0;transform:scaleX(1.12);">1</div>
<svg class="a" style="left:496px;top:120px" width="9" height="12"><path d="M0.5 1 V11" stroke="#d8d8d8"/><path d="M2.8 5 L4.6 2.8 L6.4 5 Z" fill="#555"/><path d="M2.8 7.2 L4.6 9.4 L6.4 7.2 Z" fill="#555"/></svg>
<div class="t" style="left:518.5px;top:122.63px;font-size:7.2px;transform-origin:0 0;transform:scaleX(1.12);">Width (circle)</div>
<div class="box" style="left:582.5px;top:120px;width:23.5px;height:10.5px;"></div>
<div class="t" style="left:585.0px;top:122.63px;font-size:7.2px;transform-origin:0 0;transform:scaleX(1.12);">2</div>
<svg class="a" style="left:599px;top:120px" width="9" height="12"><path d="M0.5 1 V11" stroke="#d8d8d8"/><path d="M2.8 5 L4.6 2.8 L6.4 5 Z" fill="#555"/><path d="M2.8 7.2 L4.6 9.4 L6.4 7.2 Z" fill="#555"/></svg>
<div class="btn" style="left:618.8px;top:120px;width:42.8px;height:10.5px;"></div>
<div class="t" style="left:625.20px;top:122.63px;font-size:7.2px;transform-origin:0 0;transform:scaleX(1.173);">set color</div>

<div class="t" style="left:447.70px;top:138.73px;font-size:7.2px;transform-origin:0 0;transform:scaleX(1.120);">Save path</div>
<div class="box" style="left:487.5px;top:136px;width:118px;height:11.5px;overflow:hidden;"></div>
<div class="t" style="left:487.68px;top:138.39px;font-size:7.2px;transform-origin:0 0;transform:scaleX(1.057);">on/3D_PP_UI/SHREC2021/coords</div>
<div class="btn" style="left:611.3px;top:136px;width:50.3px;height:11.5px;"></div>
<div class="t" style="left:613.00px;top:138.73px;font-size:7.2px;transform-origin:0 0;transform:scaleX(1.111);">Select Folder</div>

<div class="t" style="left:447.70px;top:155.53px;font-size:7.2px;transform-origin:0 0;transform:scaleX(1.108);">Save name</div>
<div class="box" style="left:491.5px;top:152px;width:122.5px;height:11.5px;border-color:#7fb0d8;"></div>
<div class="t" style="left:493.30px;top:155.53px;font-size:7.2px;transform-origin:0 0;transform:scaleX(1.141);">tomo01.coords</div>
<div class="a" style="left:548px;top:154.5px;width:0.8px;height:8px;background:#222;"></div>
<div class="btn" style="left:619.2px;top:152.5px;width:42.4px;height:11.5px;"></div>
<div class="t" style="left:632.71px;top:155.53px;font-size:7.2px;transform-origin:0 0;transform:scaleX(1.071);">Save</div>

<!-- text area -->
<div class="box" style="left:442.2px;top:217px;width:224.6px;height:197px;border-color:#c8c8c8;overflow:hidden;"></div>
<div class="a" style="left:443px;top:218px;width:217px;height:197px;overflow:hidden;">
<div class="t" id="log" style="left:2.6px;top:-5.9px;font-size:7.4px;line-height:8.93px;transform-origin:0 0;transform:scaleX(1.125);color:#1a1a1a;-webkit-text-stroke:0.12px #1a1a1a;">1895:[  3 373  89 173]
1896:[  4 203  92  40]
1897:[ 10 241 230  82]
1898:[  5 112 279 120]
1899:[  7  45 344 142]
1900:[ 10 311 247 144]
1901:[ 11 169 132 142]
1902:[  3 235  42  37]
1903:[12 38 33 51]
1904:[  1 114 181  52]
1905:[ 13 170 371 154]
1906:[  4 237 414 179]
1907:[ 13 151 199  99]
1908:[  8 231 477 138]
1909:[  4 327 499  70]
1910:[  6 177 253 140]
1911:[  2 384 188 113]
1912:[  5 497 233  47]
1913:[  1 483 481  41]
1914:[  5  49  65 152]
<span style="display:inline-block;line-height:7.75px;margin-top:0.6px;">Save path of manual picking: /data/ldap_shared/home/
<span style="letter-spacing:-0.2px;">t_lgl/XDB/3D_Detection/3D_PP_UI/SHREC2021/coords</span></span></div></div>
<!-- scrollbar -->
<div class="a" style="left:659.8px;top:218px;width:8px;height:197px;background:#fafafa;border-left:1px solid #d8d8d8;box-sizing:border-box;"></div>
<div class="a" style="left:660.2px;top:224.5px;width:7.6px;height:170px;background:#e2e2e2;border-left:1px solid #cfcfcf;border-right:1px solid #d4d4d4;box-sizing:border-box;"></div>
<svg class="a" style="left:659.8px;top:217px" width="9" height="200"><path d="M2.2 5 L4.5 2.6 L6.8 5 Z" fill="#444"/><path d="M2.2 192.5 L4.5 194.9 L6.8 192.5 Z" fill="#444"/><path d="M1 7.5 H8 M1 189.5 H8" stroke="#dadada" stroke-width="1"/></svg>

</div>
</body></html>
